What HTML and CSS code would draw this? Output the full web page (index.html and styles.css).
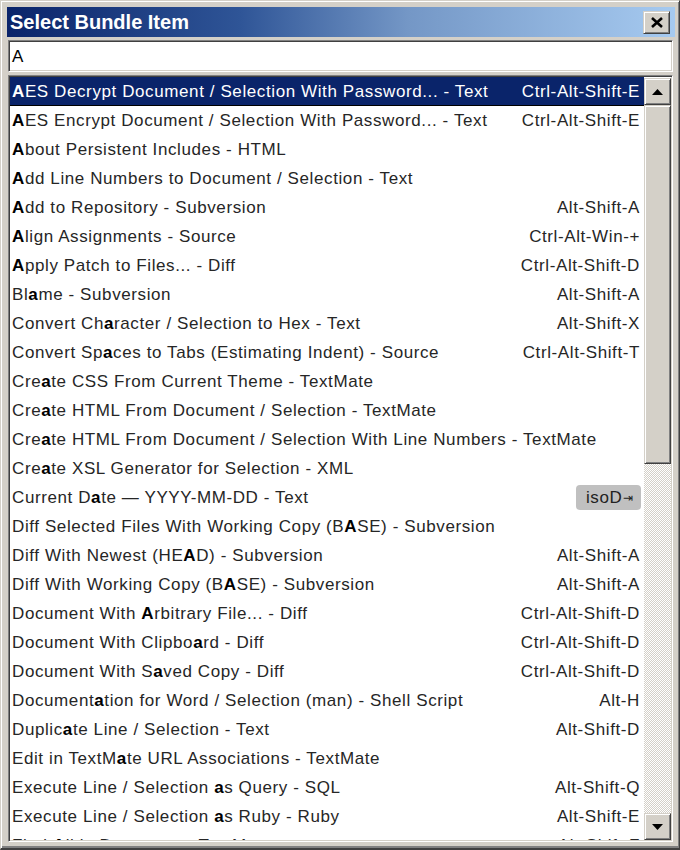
FILE: index.html
```html
<!DOCTYPE html>
<html>
<head>
<meta charset="utf-8">
<title>Select Bundle Item</title>
<link rel="stylesheet" href="styles.css">
</head>
<body>
<div class="window">
  <div class="titlebar">
    <span class="title">Select Bundle Item</span>
    <button class="close" aria-label="Close">
      <svg width="12" height="11" viewBox="0 0 12 11"><path d="M1 1 L11 10 M11 1 L1 10" stroke="#000" stroke-width="2.6" fill="none"/></svg>
    </button>
  </div>
  <div class="search">A</div>
  <div class="listbox">
    <div class="rows">
      <div class="row selected"><span class="name"><b>A</b>ES Decrypt Document / Selection With Password... - Text</span><span class="key">Ctrl-Alt-Shift-E</span></div>
      <div class="row"><span class="name"><b>A</b>ES Encrypt Document / Selection With Password... - Text</span><span class="key">Ctrl-Alt-Shift-E</span></div>
      <div class="row"><span class="name"><b>A</b>bout Persistent Includes - HTML</span></div>
      <div class="row"><span class="name"><b>A</b>dd Line Numbers to Document / Selection - Text</span></div>
      <div class="row"><span class="name"><b>A</b>dd to Repository - Subversion</span><span class="key">Alt-Shift-A</span></div>
      <div class="row"><span class="name"><b>A</b>lign Assignments - Source</span><span class="key">Ctrl-Alt-Win-+</span></div>
      <div class="row"><span class="name"><b>A</b>pply Patch to Files... - Diff</span><span class="key">Ctrl-Alt-Shift-D</span></div>
      <div class="row"><span class="name">Bl<b>a</b>me - Subversion</span><span class="key">Alt-Shift-A</span></div>
      <div class="row"><span class="name">Convert Ch<b>a</b>racter / Selection to Hex - Text</span><span class="key">Alt-Shift-X</span></div>
      <div class="row"><span class="name">Convert Sp<b>a</b>ces to Tabs (Estimating Indent) - Source</span><span class="key">Ctrl-Alt-Shift-T</span></div>
      <div class="row"><span class="name">Cre<b>a</b>te CSS From Current Theme - TextMate</span></div>
      <div class="row"><span class="name">Cre<b>a</b>te HTML From Document / Selection - TextMate</span></div>
      <div class="row"><span class="name">Cre<b>a</b>te HTML From Document / Selection With Line Numbers - TextMate</span></div>
      <div class="row"><span class="name">Cre<b>a</b>te XSL Generator for Selection - XML</span></div>
      <div class="row"><span class="name">Current D<b>a</b>te — YYYY-MM-DD - Text</span><span class="badge">isoD<span class="tab">⇥</span></span></div>
      <div class="row"><span class="name">Diff Selected Files With Working Copy (B<b>A</b>SE) - Subversion</span></div>
      <div class="row"><span class="name">Diff With Newest (HE<b>A</b>D) - Subversion</span><span class="key">Alt-Shift-A</span></div>
      <div class="row"><span class="name">Diff With Working Copy (B<b>A</b>SE) - Subversion</span><span class="key">Alt-Shift-A</span></div>
      <div class="row"><span class="name">Document With <b>A</b>rbitrary File... - Diff</span><span class="key">Ctrl-Alt-Shift-D</span></div>
      <div class="row"><span class="name">Document With Clipbo<b>a</b>rd - Diff</span><span class="key">Ctrl-Alt-Shift-D</span></div>
      <div class="row"><span class="name">Document With S<b>a</b>ved Copy - Diff</span><span class="key">Ctrl-Alt-Shift-D</span></div>
      <div class="row"><span class="name">Document<b>a</b>tion for Word / Selection (man) - Shell Script</span><span class="key">Alt-H</span></div>
      <div class="row"><span class="name">Duplic<b>a</b>te Line / Selection - Text</span><span class="key">Alt-Shift-D</span></div>
      <div class="row"><span class="name">Edit in TextM<b>a</b>te URL Associations - TextMate</span></div>
      <div class="row"><span class="name">Execute Line / Selection <b>a</b>s Query - SQL</span><span class="key">Alt-Shift-Q</span></div>
      <div class="row"><span class="name">Execute Line / Selection <b>a</b>s Ruby - Ruby</span><span class="key">Alt-Shift-E</span></div>
      <div class="row"><span class="name">Find <b>A</b>ll in Document - TextMate</span><span class="key">Alt-Shift-F</span></div>
    </div>
    <div class="scrollbar">
      <div class="sbtn"><svg width="11" height="6" viewBox="0 0 11 6"><path d="M5.5 0 L11 6 L0 6 Z" fill="#000"/></svg></div>
      <div class="track"><div class="thumb"></div></div>
      <div class="sbtn"><svg width="11" height="6" viewBox="0 0 11 6"><path d="M0 0 L11 0 L5.5 6 Z" fill="#000"/></svg></div>
    </div>
  </div>
</div>
</body>
</html>
```
FILE: styles.css
```css
html, body {
  margin: 0;
  padding: 0;
  background: #d4d0c8;
}
body {
  font-family: "Liberation Sans", Arial, sans-serif;
}
.window {
  width: 680px;
  height: 850px;
  box-sizing: border-box;
  background: #d4d0c8;
  border-style: solid;
  border-width: 1px 1px 2px 1px;
  border-color: #d4d0c8 #404040 #404040 #d4d0c8;
  box-shadow: inset 1px 1px 0 #fff, inset -1px -2px 0 #808080;
  padding: 6px 4px 6px 6px;
  display: flex;
  flex-direction: column;
  gap: 3px;
}
.titlebar {
  height: 30px;
  flex: none;
  background: linear-gradient(to right, #0a246a 0%, #2f5597 35%, #7497c6 60%, #a6caf0 100%);
  display: flex;
  align-items: center;
  justify-content: space-between;
  padding: 0 5px 0 3px;
}
.title {
  color: #fff;
  font-weight: bold;
  font-size: 20px;
}
.close {
  width: 27px;
  height: 23px;
  box-sizing: border-box;
  padding: 0;
  margin: 0;
  background: #d4d0c8;
  border: 1px solid;
  border-color: #d4d0c8 #404040 #404040 #d4d0c8;
  box-shadow: inset 1px 1px 0 #fff, inset -1px -1px 0 #808080;
  display: flex;
  align-items: center;
  justify-content: center;
}
.search {
  flex: none;
  height: 32px;
  box-sizing: border-box;
  margin: 0 2px 0 1px;
  background: #fff;
  border: 1px solid;
  border-color: #808080 #fff #fff #808080;
  box-shadow: inset 1px 1px 0 #404040, inset -1px -1px 0 #d4d0c8;
  font-size: 17px;
  letter-spacing: 0.6px;
  color: #000;
  padding: 6px 0 0 3px;
}
.listbox {
  flex: 1;
  min-height: 0;
  margin: 0 2px 0 1px;
  background: #fff;
  border: 1px solid;
  border-color: #808080 #fff #fff #808080;
  box-shadow: inset 1px 1px 0 #404040, inset -1px -1px 0 #d4d0c8;
  padding: 1px 1px 1px 1px;
  display: flex;
  overflow: hidden;
}
.rows {
  flex: 1;
  min-width: 0;
  overflow: hidden;
}
.row {
  height: 29px;
  box-sizing: border-box;
  display: flex;
  align-items: center;
  justify-content: space-between;
  padding: 0 4px 0 2px;
  font-size: 17px;
  letter-spacing: 0.6px;
  color: #262626;
  white-space: nowrap;
}
.row b {
  color: #000;
  font-weight: bold;
}
.row.selected {
  background: #0a246a;
  color: #fff;
  box-shadow: inset 0 -1px 0 #000;
}
.row.selected b {
  color: #fff;
}
.badge {
  background: #c0c0c0;
  border-radius: 4px;
  height: 25px;
  box-sizing: border-box;
  padding: 0 7px 0 10px;
  display: flex;
  align-items: center;
  font-size: 17px;
  color: #222;
  margin-right: -1px;
}
.tab {
  font-size: 12px;
  margin-left: 1px;
}
.scrollbar {
  width: 27px;
  flex: none;
  margin-top: 1px;
  display: flex;
  flex-direction: column;
}
.sbtn {
  height: 27px;
  flex: none;
  box-sizing: border-box;
  background: #d4d0c8;
  border: 1px solid;
  border-color: #d4d0c8 #404040 #404040 #d4d0c8;
  box-shadow: inset 1px 1px 0 #fff, inset -1px -1px 0 #808080;
  display: flex;
  align-items: center;
  justify-content: center;
}
.track {
  flex: 1;
  background-color: #d4d0c8;
  background-image: conic-gradient(#fff 25%, #d4d0c8 0 50%, #fff 0 75%, #d4d0c8 0);
  background-size: 2px 2px;
}
.thumb {
  height: 359px;
  box-sizing: border-box;
  background: #d4d0c8;
  border: 1px solid;
  border-color: #d4d0c8 #404040 #404040 #d4d0c8;
  box-shadow: inset 1px 1px 0 #fff, inset -1px -1px 0 #808080;
}
```
